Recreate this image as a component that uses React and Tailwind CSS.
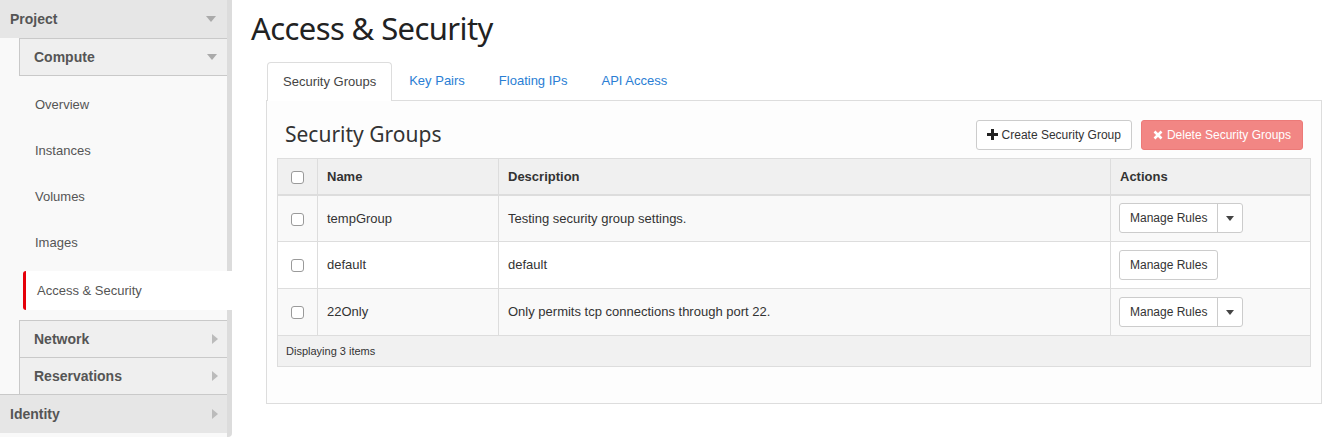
import React from 'react';

const Caret = ({ dir = 'down', className = '' }) =>
  dir === 'down' ? (
    <svg width="10" height="6" viewBox="0 0 10 6" className={className}>
      <path d="M0 0 L10 0 L5 6 Z" fill="currentColor" />
    </svg>
  ) : (
    <svg width="6" height="10" viewBox="0 0 6 10" className={className}>
      <path d="M0 0 L6 5 L0 10 Z" fill="currentColor" />
    </svg>
  );

const Checkbox = () => (
  <span className="inline-block w-[13px] h-[13px] rounded-[3px] border border-[#9a9a9a] bg-white align-middle" />
);

const groups = [
  { name: 'tempGroup', desc: 'Testing security group settings.', split: true },
  { name: 'default', desc: 'default', split: false },
  { name: '22Only', desc: 'Only permits tcp connections through port 22.', split: true },
];

const Sidebar = () => (
  <div className="w-[232px] shrink-0 h-[437px] bg-[#f9f9f9] border-r-[5px] border-[#dcdcdc] rounded-br-[4px] flex flex-col text-[#555]">
    <div className="h-[38px] flex items-center justify-between pl-[10px] pr-[11px] bg-[#e6e6e6] font-bold text-[14px]">
      <span>Project</span>
      <Caret className="text-[#aaa]" />
    </div>
    <div className="ml-[19px] h-[38px] flex items-center justify-between pl-[14px] pr-[10px] bg-[#efefef] border border-r-0 border-[#c9c9c9] font-bold text-[14px]">
      <span>Compute</span>
      <Caret className="text-[#aaa]" />
    </div>
    <div className="mt-[6px] flex flex-col text-[13px]">
      {['Overview', 'Instances', 'Volumes', 'Images'].map((t) => (
        <div key={t} className="h-[46px] flex items-center pl-[35px]">{t}</div>
      ))}
    </div>
    <div className="ml-[23px] mr-[-5px] mt-[5px] h-[39px] flex items-center pl-[11px] bg-white border-l-[3px] border-[#e5000a] rounded-l-[3px] text-[13px]">
      Access &amp; Security
    </div>
    <div className="mt-[10px] ml-[19px] h-[37px] flex items-center justify-between pl-[14px] pr-[9px] bg-[#efefef] border-t border-l border-[#c9c9c9] font-bold text-[14px]">
      <span>Network</span>
      <Caret dir="right" className="text-[#bbb]" />
    </div>
    <div className="ml-[19px] h-[37px] flex items-center justify-between pl-[14px] pr-[9px] bg-[#efefef] border-t border-l border-[#c9c9c9] font-bold text-[14px]">
      <span>Reservations</span>
      <Caret dir="right" className="text-[#bbb]" />
    </div>
    <div className="h-[39px] flex items-center justify-between pl-[10px] pr-[9px] bg-[#e6e6e6] border-t border-[#c9c9c9] font-bold text-[14px]">
      <span>Identity</span>
      <Caret dir="right" className="text-[#bbb]" />
    </div>
  </div>
);

const ManageRules = ({ split }) => (
  <div className="inline-flex h-[30px] rounded-[3px] border border-[#ccc] bg-white text-[12px] text-[#333]">
    <span className="px-[10px] flex items-center">Manage Rules</span>
    {split && (
      <span className="w-[25px] flex items-center justify-center border-l border-[#ccc]">
        <Caret className="text-[#444] w-[8px] h-[5px]" />
      </span>
    )}
  </div>
);

export default function App() {
  return (
    <div className="w-[1322px] h-[438px] flex bg-white overflow-hidden" style={{ fontFamily: '"Liberation Sans", Arial, sans-serif' }}>
      <Sidebar />
      <div className="flex-1 pl-[20px] min-w-0">
        <h1 className="mt-[8px] ml-[-1px] text-[31px] leading-[40px] tracking-[-0.6px] text-[#222]" style={{ fontFamily: '"Noto Sans", sans-serif' }}>
          Access &amp; Security
        </h1>
        <div className="ml-[14px] mt-[14px] flex text-[13px] border-b border-[#ddd] h-[39px]">
          <div className="px-[15px] flex items-center bg-white border border-b-0 border-[#ddd] rounded-t-[4px] text-[#444] mb-[-1px] ml-[1px]">
            Security Groups
          </div>
          {['Key Pairs', 'Floating IPs', 'API Access'].map((t) => (
            <div key={t} className="px-[17px] flex items-center text-[#2a7ed4]">{t}</div>
          ))}
        </div>
        <div className="ml-[14px] h-[303px] border border-t-0 border-[#ddd] bg-[#fdfdfd] px-[10px]">
          <div className="h-[57px] pt-[10px] flex items-center justify-between pl-[8px] pr-[8px]">
            <h2 className="text-[21px] text-[#333]" style={{ fontFamily: '"Noto Sans", sans-serif' }}>Security Groups</h2>
            <div className="flex gap-[9px] text-[12px]">
              <div className="h-[30px] px-[10px] flex items-center gap-[4px] bg-white border border-[#ccc] rounded-[3px] text-[#333]">
                <svg width="11" height="11" viewBox="0 0 11 11"><path d="M4 0h3v4h4v3H7v4H4V7H0V4h4z" fill="#222" /></svg>
                Create Security Group
              </div>
              <div className="h-[30px] px-[11px] flex items-center gap-[4px] bg-[#f28684] border border-[#ec7a78] rounded-[3px] text-white">
                <svg width="10" height="10" viewBox="0 0 10 10"><path d="M1.5 1.5l7 7M8.5 1.5l-7 7" stroke="#fff" strokeWidth="2.6" /></svg>
                Delete Security Groups
              </div>
            </div>
          </div>
          <table className="w-full border-collapse border border-[#ddd] text-[13px] text-[#333]">
            <thead>
              <tr className="h-[36px] bg-[#f0f0f0] border-b-2 border-[#ddd]">
                <th className="w-[40px] border-r border-[#ddd] text-center"><Checkbox /></th>
                <th className="w-[181px] border-r border-[#ddd] text-left pl-[9px] font-bold">Name</th>
                <th className="border-r border-[#ddd] text-left pl-[9px] font-bold">Description</th>
                <th className="w-[200px] text-left pl-[9px] font-bold">Actions</th>
              </tr>
            </thead>
            <tbody>
              {groups.map((g, i) => (
                <tr key={g.name} className={`h-[47px] border-b border-[#ddd] ${i % 2 === 0 ? 'bg-[#f9f9f9]' : 'bg-white'}`}>
                  <td className="border-r border-[#ddd] text-center"><Checkbox /></td>
                  <td className="border-r border-[#ddd] pl-[9px]">{g.name}</td>
                  <td className="border-r border-[#ddd] pl-[9px]">{g.desc}</td>
                  <td className="pl-[8px]"><ManageRules split={g.split} /></td>
                </tr>
              ))}
            </tbody>
            <tfoot>
              <tr className="h-[31px] bg-[#f1f1f1]">
                <td colSpan={4} className="pl-[8px] text-[11px] text-[#333]">Displaying 3 items</td>
              </tr>
            </tfoot>
          </table>
        </div>
      </div>
    </div>
  );
}
